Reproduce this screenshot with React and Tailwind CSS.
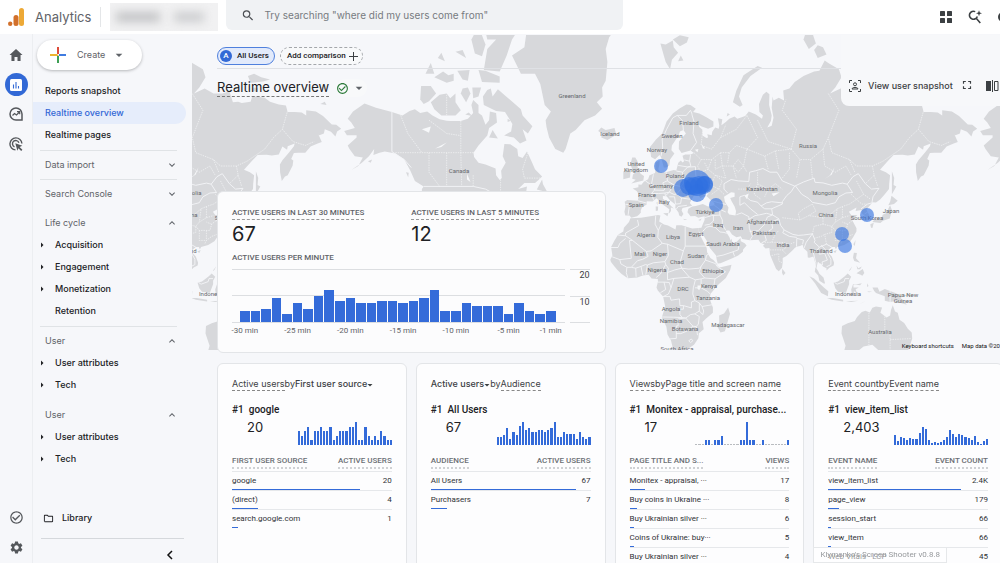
import { IoMdHome } from "react-icons/io";
import {
  MdArrowDropDown,
  MdArrowRight,
  MdCheckCircleOutline,
  MdFullscreen,
  MdKeyboardArrowDown,
  MdKeyboardArrowUp,
  MdOutlineFolder,
  MdSearch,
  MdSettings,
} from "react-icons/md";

// mercator projection used by the map drawing
const WORLD = 636;
const SCALE = WORLD / (2 * Math.PI);
const LON_ZERO = 641;
const EQUATOR = 286;

function project(pair) {
  const [lon, lat] = pair.split(",").map(Number);
  const x = LON_ZERO + (lon * WORLD) / 360;
  const y =
    EQUATOR - SCALE * Math.log(Math.tan(Math.PI / 4 + (lat * Math.PI) / 360));
  return x.toFixed(1) + " " + y.toFixed(1);
}

function toPath(coords, close) {
  return "M" + coords.split(" ").map(project).join("L") + (close ? "Z" : "");
}

const land = [
  // eurasia
  "25.7,71.1 28,71 31,70.3 29.5,69.7 33,69.4 37,68.6 41,67.7 41,66.6 38,66.1 34,66.7 32.5,67.1 33,66.5 34.8,65.9 34.8,64.5 37,63.9 38,64 37.5,64.8 40,64.6 40.3,65.4 42,66.4 44,66.1 44.3,66.8 43.5,68.4 46,68.2 45.5,66.9 48,67.6 50,68.3 53,68.8 54.5,68.3 57,68.6 59,68.9 61,69.8 65,69.2 68.5,68.3 69,69 67,69.7 66.8,71.2 69,72.8 71,73.3 72.7,72.9 72.5,71 74,69 73.5,67.8 71.5,66.4 74,66.8 75,68.5 74,70.5 74.5,72.5 75,71.8 78,72.3 81,71.8 80.5,73.5 84,73.8 87,74.8 92,75.7 98,76.3 101,76.4 104,77.7 106,77.4 112,76.6 113.5,75.5 110,74 107,73 113,73.8 118,73 123,73 127,73.4 129,71.5 132,71.6 134,71.4 139,71.6 140,72.6 147,72.3 150,71.6 155,71.1 159,70.9 160,69.7 164,69.7 168,69.6 170.5,69 170.5,70 176,69.8 180,68.9 185,67.1 187.5,67 190.3,66.1 188,65.5 187,64.3 184.5,65.4 181,66 180.5,65 178,64.6 177.5,64.7 179.3,62.9 177,62.5 173,61.7 170,60 166,60 163.5,59.9 162,58.2 163.2,57.7 162.8,56.1 161.8,55 160,53 158.5,52.5 156.7,51 155.7,54 155.6,56.5 157,57.8 161,60.2 163.5,61.8 164,62.5 160,61.8 159.7,60.8 157,61.7 155,59.5 151,59.2 148,59.4 143,59.3 140,57.7 135.3,54.8 138.6,54 141,53 140.5,50 140.4,48 138,46 135.5,44 133,42.7 131,42.8 129.7,41.5 127.5,39.7 129.3,37 129.3,35.3 126.5,34.4 126.5,37 125,38 125,39.5 121.5,39 122,40.6 119,39.2 117.7,38.7 119,37.2 122.5,37.2 119.5,35 121,32.6 122,31 121.9,29.5 120,26.5 118.5,24.5 115,22.6 111,21.5 110.3,20.4 109.7,21.5 108,21.5 106,20 105.7,18.8 108,16.5 109.3,13 109,11.5 106.8,10.4 105,8.7 105,10 103,11 102,12.5 100.9,12.8 100.5,13.5 100,13.3 99.3,10 100.3,8.3 101,6.9 103.3,4.8 104.2,1.4 103.4,1.4 101,3 100.3,6 98.4,8 98.7,10.5 98.6,13 97.6,16.5 95.3,15.8 94.4,16 94.2,19 92,21 91.5,22.7 90,22 88,21.7 87,21 86,20 82.3,16.7 80.2,15.6 80.2,13 79.8,10.3 78,8.3 76.5,9.5 74.5,14 73,17.5 72.7,21 70.5,20.8 69,22.2 70,22.8 67.5,23.8 66.5,25.3 61.6,25.1 57.3,25.7 56.5,27.1 54,26.6 51.5,27.9 50,30 48.5,30 48,29.5 50,26.7 50.8,25 51.3,26 51.6,24.2 54,24.2 56.3,26.2 56.5,24.5 58.7,23.5 59.8,22.4 57.8,20.3 57.7,19 55,17 52,15.6 48,14 45,12.8 43.4,12.6 42.8,15 42.5,17 39,21 37.2,24.8 35,28 34.9,29.5 34.3,27.9 32.5,29.8 32.5,31.2 34.2,31.3 35,33 36,35 36,36.7 34,36.3 32.5,36 30.6,36.8 28,36.7 26.3,38.5 26.8,40 29,41 31,41.2 35,42 38,41 41.5,41.5 41.5,42.5 39,44 37,45.3 39,47.2 36,46.6 35,46.2 36.5,45.4 35,44.9 33.6,44.5 32.6,45.5 33.5,46 31,46.6 29.7,45.2 28.6,43.8 27.7,42.5 28.9,41.3 26,40.8 23.5,40.3 23,39.2 24,37.7 22.9,36.5 21.6,37 21.2,38.3 19.4,40.3 19.5,41.8 16.5,43.5 14.5,45.2 12.4,45.3 12.4,44.2 13.7,43.5 16,41.9 18.5,40.1 16.9,40.5 17,39 16,38 15.7,38.2 16,39.8 14.5,40.7 12.2,41.8 10.4,43.3 8.8,44.4 6.5,43.1 3.2,43.2 3.2,41.8 0.5,40.6 -.2,39 0,38.5 -1,37.5 -2.2,36.7 -5.5,36 -6.5,37 -8.9,37 -9.4,38.7 -8.8,41 -9.2,43 -7.8,43.7 -1.8,43.4 -1.2,46 -2.5,47.3 -4.7,48.2 -1.5,48.7 -1.5,49.7 .2,49.6 1.6,50.7 4,51.6 4.8,53 8,53.7 8.2,55.5 8.2,57 10.6,57.7 10.4,56.4 9.8,55 10.9,54 14,54 18.5,54.7 20,54.6 21.1,57 22.6,57.7 23.5,57.1 24.4,57.5 23.5,59.1 25,59.5 28,59.5 30,59.9 28,60.6 23,59.9 21.4,61 21.5,63 25.4,65 24,65.8 22,65.5 21.3,64.5 17.5,62 17.2,60.7 18.9,59.8 16.5,58 16,56.2 14.2,55.5 12.9,55.5 11.3,58.8 10.5,59.3 8,58.1 5.7,58.8 5,61.5 8.5,63.5 12,65 14.5,67.7 18,69.4 22,70.4",
  // africa
  "-6,35.8 0,36 9.7,37.3 11,37 10.3,34.3 13,32.8 15.3,32.3 19.5,30.5 20,32.5 23,32.5 29,30.9 32.6,31.2 32.6,29.8 33.8,27 35.5,24 37.2,21 37.4,18.8 39.3,15.6 41,14.6 43.2,12 43,11.5 44.5,10.4 51.2,11.9 50.5,9 48,4.5 44,1 41.5,-1.8 39.5,-4.3 38.9,-6.5 39.5,-9 40.7,-12 40.7,-15 37,-18 34.8,-20 35.5,-23.8 32.8,-25.8 32.5,-28.3 30,-31.5 26,-33.8 20,-34.8 18.3,-34 17,-29.5 15,-26.5 14.4,-22.5 11.8,-17.5 13.7,-11.5 12.5,-6 9.5,-2.5 8.8,-.8 9.6,2.5 9.5,3.9 6,4.3 4.3,6.3 1,6 -2,4.8 -7.5,4.4 -11,6.8 -13.3,9 -15,11 -17,13.5 -17.4,14.7 -16.2,17 -16.9,21.5 -15,25 -13,27.8 -10,29.5 -9.7,31.3 -6.8,34",
  "49.3,-12 50.4,-15.5 47.5,-24.8 45,-25.5 43.3,-22.5 44.3,-20 44.2,-16.5 47,-15.3",
  // british isles, iceland
  "-5.5,50.1 1.3,51.2 1.7,52.7 -.2,53.5 -2,55.8 -2,57.5 -3.2,58.6 -5,58.6 -6,56.5 -4.8,54.8 -3,54 -4.5,53.2 -5,51.8 -3,51.4",
  "-10,51.6 -6.2,52.2 -6,54 -7.3,55.3 -10,54.2",
  "-22.5,64 -19,63.4 -14,64.7 -15,66.3 -18,66 -20,65.8 -22.5,66.4 -24.3,65.6 -22,65",
  // arctic russia
  "11,79.6 13,78.2 14,77.5 16.5,76.6 17.5,77.8 21,78.6 18.5,79.2 18,79.9 14,79.5",
  "18,80 22,79.3 26,79.7 27,80.2 22,80.4",
  "21,77.6 24,77.7 22.5,78.3",
  "52,71.5 56,70.7 57.5,71 55.5,72.5 57,74 62,75.7 68.5,76.8 66,77 58,75.8 54,73.5",
  "98,78.9 100,78 105,78.4 103,79.2 100,79.4",
  "92,80 95,79 99,79.6 97,80.6 94,81",
  "137.5,75.7 141,76 145,75.5 150,75.2 146,74.9 139,74.7",
  "140,73.4 143,73.3 143,73.9 140,74",
  "178.5,71.2 182,71 181,71.6",
  "48.5,68.8 50.3,69.2 49,69.5",
  // greenland
  "-73,78.3 -68,76 -60,76 -57,74.5 -54.5,71 -51,69.8 -54,68 -53.5,66.5 -52,64 -48.5,61 -44,60 -42.7,61 -40,65 -37,65.8 -32,68 -26,69 -22,70.3 -25,71.5 -21.7,72.5 -22,74 -20,75 -19,77.5 -20,79 -18,80.2 -12,81.5 -30,83.6 -60,82 -65,80.5 -66,79.2",
  // north america
  "-168,65.6 -162,66.3 -164,67.5 -166,68.3 -163,69.8 -156.5,71.3 -150,70.5 -141,69.7 -135,69 -131,69.9 -128,70.2 -125,69.5 -121,69.8 -118,69 -114,68.2 -110,67.9 -108,67.8 -102,67.8 -98,68.3 -95,69.5 -96,71 -95,71.9 -92,71 -92,69.5 -90,69 -88,67 -86,68 -85.5,69.8 -82,69.5 -81.5,67.5 -86,66.3 -87,64.5 -92,62 -94.8,60 -94.5,58.8 -92,57 -88,56.5 -82.3,55.2 -82,53 -80,51.3 -78.8,52 -79.2,54.5 -76.6,57 -78.3,59 -77.3,62.4 -74,62.3 -70,61 -69.5,59 -67,58.5 -64.5,60.3 -62,57.5 -60,55 -56,52.5 -58,51.3 -60,50.2 -66,50.2 -69.5,48 -64.5,49 -65,47 -61,45.5 -66,43.5 -70,43 -124,43 -124,48 -123,49 -128,51 -130.5,54.5 -134,58 -139,59.8 -145,60.3 -148,60 -151.5,59.3 -151,61 -154,59 -158,57 -164,54.7 -160,56 -157.5,58.6 -162,59 -165,61 -166,62 -161,64 -161,64.6 -166.5,64.6",
  "-125,72 -123,71.2 -120,71.7 -116,73 -119,74.2 -124.5,74.2",
  "-117,70.2 -113,69 -105,69 -102,70 -105,71.5 -105,73 -108,72.2 -110,73 -114,72.8 -119,71.5",
  "-117,75.5 -110,74.7 -106,75 -106,76 -109,75.8 -112,76.3",
  "-122,76 -117,76 -119,77.4",
  "-102,73 -99,71.5 -96.5,73 -98,74 -101,73.8",
  "-95.5,74 -95,72.2 -92,72.5 -90.5,74",
  "-89,71 -89.5,72.5 -87,73.6 -85,73.8 -84,72.5 -81,73.7 -77,72.7 -72,71.4 -68,70.2 -67,69 -61.5,66.7 -64,65 -67,66 -64.8,63.3 -68.5,62.5 -72,64 -77.5,64.5 -73.5,65.5 -72.8,67.2 -77,69.7 -82,69.9",
  "-92,76.5 -90,74.8 -80,74.7 -80,75.6 -88,76.4",
  "-89,76.5 -80,76.3 -76,78.3 -73,80 -62,82.5 -90,82 -87,80 -82,80 -87,79",
  "-96,80 -94,78.5 -90,78.2 -88,79.5 -92,81.2",
  "-86,64 -81,63.8 -84,65.8",
  "-104,76.4 -101,75.2 -98,75 -97,76.5",
  "-105,78.7 -99,78 -101,78.9",
  "-115,78 -111,77.6 -113,78.6",
  "-97.5,69.6 -95.6,68.9 -99.5,69.2",
  "-75.5,68.3 -73.8,67.9 -75.5,67.6",
  "-59,47.8 -53,46.8 -55.5,49.8 -56,51.5",
  "-154.6,57.5 -152.2,58 -153,57",
  "-133,54 -131.5,53.8 -131.8,52.3",
  // east asia
  "130.9,34 135.5,33.5 137,34.6 140.8,35.7 142,39.5 141,41.5 140,40 139.5,38.3 136.8,37.4 136,35.7 132.5,35.5",
  "140,41.5 143.2,42 145.3,43.4 141.8,45.4 141,43",
  "129.8,33 131.8,33.7 131,31.2 130.2,31.3",
  "142,54.3 143.3,52 143,49.5 144.5,49 142.7,46.8 142,46 142,50",
  "121.5,25.2 121,22 120.2,23",
  "108.8,19.2 110.8,20 110,18.4",
  "120.5,18.5 122.2,18.4 121.7,15.5 124,13 120.7,14 120,16",
  "122,7.2 125.5,9.6 126.4,7.3 125.3,5.8 124,6.5",
  "122,11.6 123,10 125,11 124,9.4 122.5,9.4",
  "117.5,8.5 119.5,11 118.5,9",
  "95.3,5.5 98,4.2 103.5,-.8 106,-3 105.8,-5.8 102,-4 98.5,1.5",
  "105.3,-6.7 108.5,-6.8 114.4,-7.8 114.4,-8.7 108,-7.8",
  "109,1.8 111.5,2.5 115,5.2 117,7 119,5.2 117.8,3 117.8,1 116,-3.8 111.5,-3.3 110,-1.3",
  "119.5,-5.5 120.5,-5.5 120.5,-2.8 122.5,-4.5 121.5,-1.8 123.3,-.9 120.3,-.8 120.2,.5 125,1.5 124,.4 120,1 119,-2",
  "116,-8.5 119,-8.4 123,-8.3 119,-9",
  "124,-10 127,-8.5 125,-9.5",
  "128,1.5 128.8,0 128,-.6",
  "128,-3 130.8,-3.2 129,-3.5",
  "131,-.8 134,-.8 135,-3.3 138,-1.7 144,-3.9 147.8,-6 147,-6.8 150.5,-10.5 147,-9.5 143.5,-8.6 141,-9.1 138,-8.3 138,-5.8 133,-4 132,-2.8",
  "148.5,-5.7 152,-4.3 151,-5.8",
  "80,9.7 81.8,7.3 80.5,6 79.8,7.5",
  "142.5,-10.8 143.8,-14.3 145.3,-15 146.3,-18.8 149,-20.5 151,-23.5 153.2,-25.5 153.5,-28.5 152,-32.5 150,-37 146,-39 140,-38 138,-35 136,-34.8 135,-34.6 131,-31.5 126,-32.3 123.5,-34 118,-35 115,-34.3 115.8,-32 113.5,-26 113.8,-22 117,-20.6 121,-19.5 122.3,-17.2 125,-14.5 127,-13.9 129.5,-14.9 131,-12.2 133,-11.5 136.5,-12 135.5,-15 139,-17.6 141,-16.5 141.5,-13.5",
  // mediterranean
  "8.3,41 9.7,41 9.6,39.2 8.4,39",
  "8.7,42.6 9.4,43 9.3,41.4",
  "12.5,38 15.5,38.2 15,36.7",
  "23.6,35.5 26.2,35.2 24.8,35",
  "32.4,35 34.4,35.6 33.5,34.6",
];

const water = [
  "47,45 51,46.8 53,46.6 53,45 50.5,44.5 51.3,43.2 53,41 53.8,39 53.5,37 50,37.5 49,38.5 49.5,40.5 47.5,43",
  "58.5,45.5 61,46.3 60,44",
  "104,51.7 107,53 109.5,55.6 108,53.2",
  "30.5,60.8 32.5,61 32,60.1",
  "34.5,62.2 36.3,61.2 35,61.2",
  "32,.3 34,.2 33,-2.4 32,-1.5",
  "-124,66 -119,66.6 -120,65.2",
  "-116.5,61.2 -110,62.8 -113,61.6",
  "-98.5,53.5 -96.5,50.6 -98.5,51.5",
  "74,46.3 78.5,46.8 75,45.2",
];

const borders = [
  "49,46.5 47,48 47,50 51,51.5 55,51 61,50.8 61.5,54 65,54.5 69,55.2 73,54 77,54 80,51 87,49.1 92,50.6 98,52 98.5,50.5 103,50.3 108,49.4 114,50.2 116.7,49.8 120,52.5 123,53.5 127,50 130.5,48 134.7,48.3 131.3,45 130.7,42.5",
  "87.5,49.1 91,46 95,44.3 97,42.7 105,41.6 110,42.6 112,45 116,46.5 119.7,46.7 116.7,49.8",
  "87,49.1 85,47 82.5,45.5 80,43 80,42 74,40 74.5,37.3 78,35.5 79,32.5 81,30.2 86,28 89,27.5 92,27.7 97,28.3 98.5,25 98,24 101,21.5 105,23 108,21.5",
  "56,45 56,41.5 58.5,42.6 62,40 66,37.5",
  "56,45 58.5,45.6 62,43.5 66,42.8 68,41.2 71,42.5 74,43 80,42.5",
  "68,41.2 70,40 73,40 74,40",
  "54,37.4 57,38.2 61,36.5 61.3,31 63,27 61.7,25.2",
  "61,35.3 64.5,37 67,37.3 71,38 74.5,37.3 71.5,36.3 70,33 66.3,29.8 61.5,29.5",
  "68.2,23.7 71,25 70,28 74.5,31 74,34 78,35.5",
  "81,30.2 80.2,28.8 84,27 88.2,26.5",
  "40,43.4 44,42.6 48.3,41.8",
  "41.5,41.5 44.5,39.8 48,38.6",
  "44.5,39.8 44.7,37.2 46,35 46,33 48,30",
  "36,36 40,37 44.7,37.2",
  "41,37 41,34.5 39,33 36,32.5",
  "35,29.5 37,31.5 39,32 42,31.5 44.7,29.2 47,29 48.5,28.5",
  "42.8,16.5 46.5,17.2 52,19 53,16.6",
  "52,19 55,20 55.5,22.7 51.5,24.2",
  "24,52 31,52 34,52.3 36,50.3 40,49.6 39,47.2",
  "24,52 24,50 22.5,49 24.5,48 28,48.4 30,46.2",
  "24,52 23.5,54 26.5,55.7 30.8,55.8 31,53 31.5,52",
  "22.5,49 19,49.4 15,50.9 14.2,54",
  "20,54.4 23.5,54",
  "14.8,51 12.3,50.3 13.8,48.7 13,47.5 7.6,47.6 8.2,49 6,50 7,53.3",
  "2.5,51 6,49.5 8.2,49",
  "7.6,47.6 6,46.3 7,44 7.5,43.7",
  "6,46.3 10,46.3 13.5,46.5 16,46.8 17,48 19,49.4",
  "-1.8,43.4 3.2,42.4",
  "-8.8,41.9 -6.5,41.8 -7.3,37.3",
  "11.3,59 12.3,61.5 12,63.5 14.5,66 18,68.5 20.5,69 25.7,69 28,70 29,69.2",
  "24,65.8 23.5,67.9 20.5,69",
  "28.8,69.2 30,67.7 29.5,65 31.5,62.8 28,60.6",
  "28,59.4 27.5,57.5 28.2,56 26.5,55.7 21,56.2",
  "24.5,57.9 27.5,57.5",
  "13.5,46.5 13.8,45.4 16,46.8 18.8,45.9 20.2,46.1 22.9,44.5 28,44",
  "20.2,46.1 22.5,48",
  "16,45 19,45 19.5,42 22.4,42.2 22.9,44.5",
  "20,39.8 21,41 26,41.5",
  "-2,35 -1.3,32.3 -8.7,28.7 -8.7,27.3 -13,27.7",
  "-8.7,27.3 -4.8,25 3,19.2 5.8,19.5 12,23.5 9.5,26.5 9.8,30 8,33 8.3,36.9",
  "9.8,30 11.5,33",
  "25,31.7 25,22 37,22",
  "12,23.5 15,23 24,19.5 25,22",
  "-4.8,25 -6.5,25 -5.5,15.5 -12,14.8 -16.3,16.3",
  "-17,21.3 -13,21.3 -12,23.5 -8.7,26",
  "3,19.2 4,16.5 .8,14.9 -2,14.2 -5.5,10.5 -8,10.5 -11.4,12.4 -12,14.8",
  "-8,10.5 -8.3,7.5 -7.5,4.6",
  "-3,10 -2.8,5.2",
  "-5.5,10.5 -3,10 0,11 2.5,12 3.6,11.8",
  "0,11 1,6.2",
  "15,23 15.5,17 13.5,13.7 7,13 3.6,11.8 2.7,6.4",
  "13.5,13.7 14,12 11,6.8 8.6,4.8",
  "24,19.5 22,13 23,10 27,9.5 33,10 34,11 36.5,14.5 37,17 38.5,18",
  "14,12 15.5,10 15,7.6 19,9 23,10 27.4,5 18.6,4.3 15,3.5 15,7.6",
  "9.6,2.2 13,2.2 16,2 17,-1",
  "13,2.2 14,-2 11,-3.8",
  "18.6,4.3 17,-1 15.5,-4.5 12.5,-6",
  "27.4,5 30.8,3.5 29.6,-1 29.3,-4.5 30.5,-8.3 28.5,-9 28.5,-12.3 24,-11 22,-11 21.8,-7.3 17,-8 16.5,-6 12.5,-6",
  "34,11 33,8 36,4.5 41.9,4 47.9,8 43,11 42.3,12.5 36.5,14.5",
  "30.8,3.5 34,4 36,4.5",
  "34,4 34,-1 37.6,-3 39.3,-4.6",
  "41.9,4 41,-1.7",
  "30.5,-1 34,-1",
  "30.5,-8.3 33,-9.5 34.5,-11.5 40.5,-10.5",
  "11.8,-17.3 18.5,-17.4 23.4,-17.6 22,-16 22,-13 24,-13 24,-11",
  "23.4,-17.6 25.3,-17.8 28,-16 30.4,-15.6 33,-14 33,-9.5",
  "20,-28.4 20,-22 21,-22 21,-18.3 25.3,-17.8 29.4,-22.2 26,-24.7 22.5,-26 20,-26",
  "16.5,-28.6 20,-28.4",
  "30.4,-15.6 33,-17 32.5,-21 31.3,-22.4 32,-26.8",
  "29.4,-22.2 31.3,-22.4",
  "33,-14 35,-16 35.5,-14 34.5,-11.5",
  "27,-29.6 28.5,-28.7 29.3,-29.6 28,-30.5 27,-29.6",
  "92.3,21 93.5,24 97,28.3",
  "98.7,10.3 99,13 97.5,18.5 100,20.3 101,21.5",
  "100,20.3 101,17.7 104,18.2 105.5,14.5 102.5,13.5 102.8,11.8",
  "102,22.5 104.5,20 107.5,15 107.5,12 105,10.8",
  "88,21.8 88.2,26 92,25.2 91.5,23",
  "124.5,40 128.2,42 130.6,42.5",
  "126.5,37.7 128.3,38.6",
  "109.6,2 111,1 115,2.5 115.5,4.2 117.8,4.2",
  "141,-2.6 141,-9.1",
  "-141,69.7 -141,60.3 -137,59 -134,58 -130,55.5",
  "-123,49 -95,49 -88,48 -84,46.5 -79,43.5",
];

const regions = [
  "129,-15 129,-31.7",
  "138,-17 138,-26 141,-26 141,-34",
  "129,-26 138,-26",
  "141,-29 153,-28.5",
  "-136,69 -132,65 -124,60",
  "-139,60 -94.8,60",
  "-110,60 -110,49",
  "-120,60 -120,54 -114,49",
  "-102,67.8 -102,64.5 -102,60 -101.5,49",
  "-120,68 -110,65 -102,64.5",
  "-94.8,60 -89,56.8",
  "-95,53 -95,49",
  "-79.5,51.5 -79.5,47",
  "-110,69 -110,73",
  "-64,60 -67,55 -66,52 -57,52",
  "60,69 66,64 60,61 58,56 60,54",
  "106,73 112,70 106,64 108,60 118,58 122,56 131,56 137,57.5 147,61 152,64 157,66 160,70",
  "66,68 72,63 85,61 88,66 80,70 82,72",
  "85,61 90,58 96,58 103,61 106,64",
  "60,61 70,59 76,60.5 85,61",
  "70,59 72,55",
  "76,60.5 78,55",
  "90,58 88,52",
  "84,60 84,55 80,52",
  "96,58 97,52",
  "103,61 104,56 110,54 116,56 119,53",
  "131,56 132,53 127,50",
  "132,53 134,49",
  "118,58 121,54",
  "157,66 163,63 170,62 175,63",
  "30,60 34,58 32,56 34,54 34,52",
  "34,58 40,58 45,60 50,60 54,62 60,61",
  "40,58 38,55 42,53 40,50",
  "36,57 38,55 34,54",
  "42,53 46,51 44,48 47,46",
  "38,50 44,48 40,46",
  "45,60 46,56 52,56 55,58 58,56 55,54 52,56",
  "42,58 42,55 46,56 48,52 42,53",
  "52,56 54,52",
  "50,60 49,57",
  "35,66 34,62 40,61 45,64 48,67",
  "45,64 54,66 60,69",
  "80,36 90,35 95,37 103,36 108,38 111,40",
  "97,42 99,39 95,37",
  "97,28 98,32 103,33 108,32 110,34 111,40 114,41 118,42 122,44 126,46",
  "103,33 103,36",
  "108,32 110,30 116,30 117,33 120,35",
  "105,23 104,28 108,29 108,32",
  "98,26 102,27 104,28",
  "110,30 110,25 114,25 117,27 120,28",
  "114,30 114,25 113,23",
  "114,41 114,36 110,34",
  "114,36 118,37",
  "117,33 114,34",
  "119,46 122,44 125,42 128,42",
  "122,51 126,46 130,44",
  "90,35 89,38 92,40 97,42",
  "70,24 74,24 80,24 84,23 87,24",
  "74,24 76,28 78,30",
  "73,20 80,20 82,18",
  "74,17 78,18 78,14 80,13",
  "80,24 82,21 80,20",
  "55,48 60,48 62,50",
  "66,54 66,50 72,48 76,50 80,48",
  "66,50 64,46 68,44",
  "72,48 70,45",
];

const labels = [
  ["Greenland", 572, 96],
  ["Iceland", 610, 134],
  ["Canada", 459, 171],
  ["Finland", 689, 123],
  ["Sweden", 672, 136],
  ["Norway", 657, 150],
  ["United", 636, 164],
  ["Kingdom", 636, 170],
  ["Poland", 675, 176],
  ["Germany", 661, 186],
  ["France", 647, 195],
  ["Spain", 636, 205],
  ["Italy", 664, 202],
  ["Türkiye", 705, 212],
  ["Russia", 808, 146],
  ["Kazakhstan", 762, 189],
  ["Mongolia", 825, 193],
  ["China", 826, 215],
  ["South Korea", 867, 218],
  ["Japan", 891, 211],
  ["Afghanistan", 763, 222],
  ["Pakistan", 764, 233],
  ["Iraq", 718, 225],
  ["Iran", 738, 228],
  ["Algeria", 646, 235],
  ["Libya", 673, 237],
  ["Egypt", 696, 234],
  ["Saudi Arabia", 723, 244],
  ["India", 783, 245],
  ["Thailand", 821, 251],
  ["Mali", 640, 254],
  ["Niger", 660, 254],
  ["Chad", 677, 262],
  ["Sudan", 696, 256],
  ["Nigeria", 657, 270],
  ["Ethiopia", 713, 271],
  ["DRC", 683, 289],
  ["Kenya", 709, 286],
  ["Tanzania", 708, 298],
  ["Angola", 671, 309],
  ["Namibia", 671, 321],
  ["Botswana", 685, 329],
  ["Madagascar", 728, 325],
  ["South Africa", 677, 349],
  ["Indonesia", 848, 294],
  ["Papua New", 903, 295],
  ["Guinea", 903, 301],
  ["Australia", 880, 332],
];

const dots = [
  [661, 166, 7],
  [716, 205, 7],
  [867, 215, 7],
  [842, 234, 7],
  [845, 246, 7],
  [697, 183, 13],
  [683, 188, 9],
  [697, 193, 9],
  [704, 185, 9],
  [689, 186, 9],
  [699, 185, 9],
  [694, 186, 9],
  [705, 184, 8],
];

const activeUsers = [
  4, 4, 5, 9, 3, 7, 5, 10, 12, 8, 9, 7, 7, 8, 8, 7, 8, 9, 12, 4, 4, 7, 6, 6, 6,
  3, 7, 4, 3, 4,
];

const ticks = [30, 25, 20, 15, 10, 5, 1];

const cards = [
  {
    metric: "Active users",
    dimension: "First user source",
    menu: "dimension",
    top: "google",
    value: "20",
    head: ["FIRST USER SOURCE", "ACTIVE USERS"],
    bars: [
      3, 2, 3, 4, 1, 3, 3, 4, 3, 3, 4, 1, 2, 3, 3, 3, 4, 4, 5, 1, 1, 4, 2, 1, 2,
      1, 3, 2, 1, 1,
    ],
    rows: [
      ["google", "20", 80],
      ["(direct)", "4", 16],
      ["search.google.com", "1", 4],
    ],
  },
  {
    metric: "Active users",
    dimension: "Audience",
    menu: "metric",
    top: "All Users",
    value: "67",
    head: ["AUDIENCE", "ACTIVE USERS"],
    bars: activeUsers,
    rows: [
      ["All Users", "67", 91],
      ["Purchasers", "7", 10],
    ],
  },
  {
    metric: "Views",
    dimension: "Page title and screen name",
    top: "Monitex - appraisal, purchase...",
    value: "17",
    head: ["PAGE TITLE AND S...", "VIEWS"],
    bars: [
      0, 0, 0, 1, 1, 0, 1, 1, 2, 0, 0, 0, 0, 0, 1, 1, 5, 1, 1, 0, 0, 1, 0, 0, 0,
      0, 0, 0, 0, 1,
    ],
    rows: [
      ["Monitex - appraisal, ···", "17", 10],
      ["Buy coins in Ukraine ···", "8", 5],
      ["Buy Ukrainian silver ···", "6", 3],
      ["Coins of Ukraine: buy···", "5", 3],
      ["Buy Ukrainian silver ···", "4", 2],
    ],
  },
  {
    metric: "Event count",
    dimension: "Event name",
    top: "view_item_list",
    value: "2,403",
    head: ["EVENT NAME", "EVENT COUNT"],
    bars: [
      30, 12, 24, 22, 14, 22, 18, 18, 36, 54, 48, 15, 6, 8, 6, 10, 15, 24, 46,
      32, 24, 32, 30, 24, 21, 15, 28, 9, 4, 12, 18,
    ],
    barMax: 69,
    rows: [
      ["view_item_list", "2.4K", 83],
      ["page_view", "179", 7],
      ["session_start", "66", 2],
      ["view_item", "66", 2],
      ["Web Vitals - LCP", "45", 2],
    ],
  },
];

const navGroups = [
  { title: "Data import", line: true },
  { title: "Search Console", line: true },
  {
    title: "Life cycle",
    items: ["Acquisition", "Engagement", "Monetization", "Retention"],
  },
  { title: "User", line: true, items: ["User attributes", "Tech"] },
  { title: "User", items: ["User attributes", "Tech"] },
];

function WorldMap() {
  return (
    <svg
      viewBox="192 35 808 315"
      preserveAspectRatio="xMinYMin slice"
      className="absolute top-0 left-0 h-[315px] w-full"
      aria-label="Active users by location"
    >
      <defs>
        <g id="world">
          {land.map((c, i) => (
            <path key={i} d={toPath(c, true)} fill="#d7d8db" />
          ))}
          {water.map((c, i) => (
            <path key={i} d={toPath(c, true)} fill="#f7f8fa" />
          ))}
          <g fill="none" stroke="#f4f5f7" strokeLinejoin="round">
            {borders.map((c, i) => (
              <path key={i} d={toPath(c)} strokeWidth="0.9" />
            ))}
            {regions.map((c, i) => (
              <path
                key={i}
                d={toPath(c)}
                strokeWidth="0.7"
                strokeDasharray="1.4 1"
              />
            ))}
          </g>
          <g
            fill="#66686c"
            fontFamily="Roboto, sans-serif"
            fontSize="6"
            textAnchor="middle"
          >
            {labels.map(([name, x, y]) => (
              <text key={name} x={x} y={y + 2}>
                {name}
              </text>
            ))}
          </g>
        </g>
      </defs>
      <use href="#world" x={-WORLD} />
      <use href="#world" x={WORLD} />
      <use href="#world" />
      <g fill="#2f6fe0" fillOpacity="0.62">
        {dots.map(([x, y, r], i) => (
          <circle key={i} cx={x} cy={y} r={r} />
        ))}
      </g>
    </svg>
  );
}

function Header() {
  return (
    <header className="flex h-[34px] shrink-0 items-center overflow-hidden bg-white">
      <a href="#home" className="flex items-center gap-[11px] pl-2">
        <svg viewBox="0 0 16 18" className="h-[18px] w-4">
          <rect x="11" y="0" width="5" height="18" rx="2.5" fill="#eda936" />
          <rect x="5.5" y="7" width="5" height="11" rx="2.5" fill="#d2702b" />
          <circle cx="2.2" cy="15.8" r="2.2" fill="#d2702b" />
        </svg>
        <span className="text-[13px] leading-[18px] text-[#5f6368]">
          Analytics
        </span>
      </a>
      <div className="ml-[9px] h-[20px] w-px bg-[#e4e6e8]" />
      <div className="relative ml-[9px] h-[28px] w-[108px] overflow-hidden bg-[#f1f1f2]">
        <div className="absolute top-[9px] left-[6px] h-[10px] w-[44px] bg-[#c2c3c5] blur-[5px]" />
        <div className="absolute top-[9px] left-[64px] h-[10px] w-[30px] bg-[#cccdcf] blur-[5px]" />
      </div>
      <label className="ml-2 flex h-[30px] w-[397px] items-center gap-[9px] self-start rounded-b-md bg-[#f0f2f4] pl-[15px]">
        <MdSearch className="h-[15px] w-[15px] text-[#4b4e52]" />
        <input
          type="text"
          aria-label="Search"
          placeholder={'Try searching "where did my users come from"'}
          className="w-full bg-transparent text-[10px] leading-4 outline-none placeholder:text-[#777b80]"
        />
      </label>
      <div className="-mr-2 ml-auto flex shrink-0 items-center gap-4 text-[#3c4043]">
        <button type="button" aria-label="Apps">
          <svg viewBox="0 0 12 12" className="h-3 w-3 fill-current">
            <rect width="5" height="5" rx="0.6" />
            <rect x="7" width="5" height="5" rx="0.6" />
            <rect y="7" width="5" height="5" rx="0.6" />
            <rect x="7" y="7" width="5" height="5" rx="0.6" />
          </svg>
        </button>
        <button type="button" aria-label="Insights">
          <svg viewBox="0 0 14 14" className="h-[14px] w-[14px]">
            <path
              d="M7.2 1.6A4 4 0 1 0 9.3 6.4M8.2 8.3L12.3 13"
              fill="none"
              stroke="currentColor"
              strokeWidth="1.6"
            />
            <path
              d="M11 .2l.8 2.2 2.2.8-2.2.8-.8 2.2-.8-2.2L8 3.2l2.2-.8z"
              fill="currentColor"
            />
          </svg>
        </button>
        <button
          type="button"
          aria-label="Help"
          className="h-[10px] w-[10px] rounded-full bg-[#3c4043]"
        />
      </div>
    </header>
  );
}

function Rail() {
  return (
    <nav className="flex w-[33px] shrink-0 flex-col items-center border-r border-[#eceef1] pt-[13px] pb-2 text-[#55585c]">
      <a href="#home" aria-label="Home">
        <IoMdHome className="h-4 w-4" />
      </a>
      <a
        href="#reports"
        aria-label="Reports"
        className="mt-[10px] flex h-[23px] w-[23px] items-center justify-center rounded-full bg-[#3269d6]"
      >
        <svg viewBox="0 0 12 12" className="h-3 w-3">
          <rect width="12" height="12" rx="1.5" fill="#fff" />
          <path
            d="M3.500 5.500v4M6 3v6.500M8.500 7v2.500"
            stroke="#3269d6"
            strokeWidth="1.1"
          />
        </svg>
      </a>
      <a href="#explore" aria-label="Explore" className="mt-[11px]">
        <svg
          viewBox="0 0 14 14"
          className="h-[14px] w-[14px]"
          fill="none"
          stroke="currentColor"
          strokeWidth="1.5"
        >
          <path d="M7 1a6 6 0 1 0 0 12h6V7A6 6 0 0 0 7 1z" />
          <path d="M3.500 8.500l2-2 2 1.500 3-3M8 4.700h2.700v2.600" strokeWidth="1.200" />
        </svg>
      </a>
      <a href="#advertising" aria-label="Advertising" className="mt-4">
        <svg
          viewBox="0 0 14 14"
          className="h-[14px] w-[14px]"
          fill="none"
          stroke="currentColor"
          strokeWidth="1.4"
        >
          <path d="M6.500 12.900A6 6 0 1 1 12.900 6.500" />
          <path d="M5.500 9.800A3.300 3.300 0 1 1 9.900 5.700" />
          <path
            d="M6.300 6.300l7 2.500-2.700 1.200 2.800 2.800-1.200 1.200-2.800-2.800-1 2.500z"
            fill="currentColor"
            stroke="none"
          />
        </svg>
      </a>
      <a href="#tasks" aria-label="Tasks" className="mt-auto">
        <MdCheckCircleOutline className="h-[15px] w-[15px]" />
      </a>
      <a href="#admin" aria-label="Admin" className="mt-[15px]">
        <MdSettings className="h-[15px] w-[15px]" />
      </a>
    </nav>
  );
}

function NavGroup({ title, items, line }) {
  return (
    <div
      className={`border-t py-[3px] ${
        line ? "border-[#e0e3e6]" : "border-transparent"
      }`}
    >
      <button
        type="button"
        className="flex h-[22px] w-full items-center justify-between pl-[5px] text-[#5f6368]"
      >
        {title}
        {items ? (
          <MdKeyboardArrowUp className="-mr-px h-3 w-3" />
        ) : (
          <MdKeyboardArrowDown className="-mr-px h-3 w-3" />
        )}
      </button>
      {items && (
        <ul className="mb-px font-medium text-[#202124]">
          {items.map((item) => (
            <li key={item}>
              <a href={"#" + item} className="flex h-[22px] items-center">
                <span className="w-[15px]">
                  {item !== "Retention" && (
                    <MdArrowRight className="-ml-1 h-3 w-3" />
                  )}
                </span>
                {item}
              </a>
            </li>
          ))}
        </ul>
      )}
    </div>
  );
}

function Sidebar() {
  return (
    <aside className="flex w-[159px] shrink-0 flex-col text-[9px] leading-3">
      <button
        type="button"
        className="mt-[6px] ml-1 flex h-[30px] w-[105px] shrink-0 items-center rounded-full bg-white pl-[13px] text-[#5f6368] shadow-[0_1px_3px_rgba(60,64,67,0.35)]"
      >
        <svg viewBox="0 0 16 16" className="mr-[11px] h-4 w-4">
          <path d="M7 0h2v7H7z" fill="#dd4b3a" />
          <path d="M7 9h2v7H7z" fill="#3f9f55" />
          <path d="M0 7h7l2 2H0z" fill="#eeb430" />
          <path d="M9 7h7v2H9z" fill="#3f7be0" />
        </svg>
        Create
        <MdArrowDropDown className="ml-[6px] h-4 w-4" />
      </button>
      <ul className="mt-[10px] mb-1 font-medium text-[#202124]">
        <li>
          <a href="#snapshot" className="flex h-[22px] items-center pl-3">
            Reports snapshot
          </a>
        </li>
        <li>
          <a
            href="#realtime"
            className="mr-[6px] flex h-[22px] items-center rounded-r-full bg-[#e6edfb] pl-3 text-[#3367d6]"
          >
            Realtime overview
          </a>
        </li>
        <li>
          <a href="#pages" className="flex h-[22px] items-center pl-3">
            Realtime pages
          </a>
        </li>
      </ul>
      <div className="mr-[15px] ml-[7px]">
        {navGroups.map((group, i) => (
          <NavGroup key={i} {...group} />
        ))}
      </div>
      <a
        href="#library"
        className="mt-auto flex h-[22px] items-center gap-2 pl-[10px] font-medium text-[#202124]"
      >
        <MdOutlineFolder className="h-[11px] w-[11px]" />
        Library
      </a>
      <div className="mt-[9px] mr-2 ml-2 flex h-[25px] justify-end border-t border-[#d5d8dc] pr-[10px]">
        <button type="button" aria-label="Collapse">
          <svg
            viewBox="0 0 8 10"
            className="mt-2 h-[10px] w-2"
            fill="none"
            stroke="#111"
            strokeWidth="1.500"
          >
            <path d="M6 1L2 5l4 4" />
          </svg>
        </button>
      </div>
    </aside>
  );
}

function Toolbar() {
  return (
    <div className="flex justify-between">
      <div className="grow">
        <div className="flex gap-[5px] border-b border-[#dfe1e5] pt-3 pb-[3px] [font-family:Roboto,sans-serif] text-[8px] leading-3 font-medium text-[#202124]">
          <button
            type="button"
            className="flex h-[18px] items-center gap-[5px] rounded-full border border-[#4f80dd] bg-[#e2eafb] pr-[5px] pl-[2px]"
          >
            <span className="flex h-3 w-3 items-center justify-center rounded-full bg-[#3269d6] text-white">
              A
            </span>
            All Users
          </button>
          <button
            type="button"
            className="flex h-[18px] items-center gap-[3px] rounded-full border border-dashed border-[#a4a7ab] bg-[#f8f9fa] pr-1 pl-[6px]"
          >
            Add comparison
            <svg viewBox="0 0 9 9" className="h-[9px] w-[9px]">
              <path d="M4.500 0v9M0 4.500h9" stroke="#3c4043" />
            </svg>
          </button>
        </div>
        <div className="mt-[10px] flex items-center">
          <h1 className="border-b border-dashed border-[#777] text-[13px] leading-[17px] text-[#202124]">
            Realtime overview
          </h1>
          <button
            type="button"
            aria-label="Report status"
            className="ml-[7px] flex h-[18px] items-center gap-[2px] rounded-full bg-[#f8f9fa]"
          >
            <MdCheckCircleOutline className="h-[13px] w-[13px] text-[#2c7a3a]" />
            <MdArrowDropDown className="h-4 w-4 text-[#5f6368]" />
          </button>
        </div>
      </div>
      <div className="flex h-[71px] w-[162px] shrink-0 items-end rounded-bl-lg bg-[#f7f8fa] pb-[14px] pl-2 text-[#3c4043]">
        <button
          type="button"
          className="flex items-center gap-[7px] text-[9px] leading-3 font-medium whitespace-nowrap"
        >
          <svg
            viewBox="0 0 12 12"
            className="h-3 w-3"
            fill="none"
            stroke="currentColor"
          >
            <path d="M.5 3V.5H3M9 .5h2.500V3M11.500 9v2.500H9M3 11.500H.5V9" />
            <circle cx="6" cy="4.300" r="1.500" />
            <path d="M3 9c0-2 6-2 6 0z" />
          </svg>
          View user snapshot
        </button>
        <button type="button" aria-label="Full screen" className="ml-[7px]">
          <MdFullscreen className="h-[14px] w-[14px]" />
        </button>
        <button type="button" aria-label="Compare" className="ml-3">
          <svg viewBox="0 0 13 12" className="h-3 w-[13px]">
            <path d="M0 1h5v10H0zM6 0h1v12H6z" fill="currentColor" />
            <path d="M8.500 1.500h3.500v9H8.500z" fill="none" stroke="currentColor" />
          </svg>
        </button>
      </div>
    </div>
  );
}

function UserCount({ title, count }) {
  return (
    <div>
      <h2 className="inline-block border-b border-dashed border-[#999] pb-px">
        {title}
      </h2>
      <p className="mt-[2px] [font-family:Inter,sans-serif] text-[20px] leading-6 font-normal text-[#202124]">
        {count}
      </p>
    </div>
  );
}

function UsersCard() {
  return (
    <section className="mt-[85px] h-[162px] rounded-md border border-[#e3e5e8] bg-[#fcfcfd] px-[14px] pt-4 [font-family:Roboto,sans-serif] text-[8px] leading-[10px] font-medium text-[#5f6368]">
      <div className="grid grid-cols-2">
        <UserCount title="ACTIVE USERS IN LAST 30 MINUTES" count="67" />
        <UserCount title="ACTIVE USERS IN LAST 5 MINUTES" count="12" />
      </div>
      <h2 className="mt-[7px]">ACTIVE USERS PER MINUTE</h2>
      <div className="mt-[6px] flex font-normal">
        <div className="relative mr-[5px] grow">
          <div className="absolute inset-x-0 top-0 h-[27px] border-y border-[#dcdee1]" />
          <div className="relative grid h-[54px] grid-cols-30 items-end gap-px border-b border-[#dcdee1] pr-[9px] pl-2">
            {activeUsers.map((count, i) => (
              <div
                key={i}
                className="bg-[#346bd9]"
                style={{ height: `${count * 5}%` }}
              />
            ))}
          </div>
          <div className="grid grid-cols-30 gap-px pt-[3px] pr-[9px] pl-2">
            {ticks.map((tick) => (
              <div
                key={tick}
                className="row-start-1 flex justify-center whitespace-nowrap"
                style={{ gridColumnStart: 31 - tick }}
              >
                -{tick} min
              </div>
            ))}
          </div>
        </div>
        <div className="mr-px h-[54px] w-5 shrink-0 border-b border-[#dcdee1] text-right text-[9px] leading-[10px] text-[#3c4043]">
          <div className="h-[27px] border-t border-[#dcdee1]">20</div>
          <div className="h-[26px] border-t border-[#dcdee1]">10</div>
        </div>
      </div>
    </section>
  );
}

function Sparkline({ bars, max }) {
  const top = max || Math.max(...bars);
  return (
    <div className="flex h-[23px] w-[94px] items-end gap-px">
      {bars.map((count, i) =>
        count ? (
          <div
            key={i}
            className="flex-1 bg-[#346bd9]"
            style={{ height: `${(count / top) * 100}%` }}
          />
        ) : (
          <div key={i} className="h-px flex-1 bg-[#b9bcc0]" />
        )
      )}
    </div>
  );
}

function ReportCard({ card }) {
  const underline = "border-b border-dashed border-[#888]";
  return (
    <section className="h-[260px] rounded-md border border-[#e3e5e8] bg-[#fdfdfe] px-[14px] pt-[14px]">
      <h2 className="flex items-baseline text-[9px] leading-3 whitespace-nowrap text-[#3c4043]">
        <span className={card.menu === "metric" ? "font-medium" : underline}>
          {card.metric}
        </span>
        {card.menu === "metric" && (
          <MdArrowDropDown className="-mx-[3px] h-3 w-3 self-center" />
        )}
        by
        <span className={card.menu === "dimension" ? "font-medium" : underline}>
          {card.dimension}
        </span>
        {card.menu === "dimension" && (
          <MdArrowDropDown className="-mx-[3px] h-3 w-3 self-center" />
        )}
      </h2>
      <div className="mt-3 flex gap-[5px] [font-family:Roboto,sans-serif] text-[10px] leading-[14px] font-medium whitespace-nowrap text-[#202124]">
        <span>#1</span>
        <span>{card.top}</span>
      </div>
      <div className="flex h-[28px] items-end justify-between pl-[15px]">
        <p className="self-start text-[13px] leading-5 text-[#202124]">
          {card.value}
        </p>
        <Sparkline bars={card.bars} max={card.barMax} />
      </div>
      <table className="mt-[10px] w-full table-fixed border-collapse [font-family:Roboto,sans-serif] text-[8px] leading-3 text-[#303236]">
        <thead>
          <tr className="border-b border-[#e6e8eb] text-[#6b6f74]">
            <th className="h-[16px] p-0 text-left align-top font-medium">
              <span className="inline-block whitespace-nowrap border-b-2 border-dotted border-[#cfd1d4]">
                {card.head[0]}
              </span>
            </th>
            <th className="w-[70px] p-0 text-right align-top font-medium">
              <span className="inline-block border-b-2 border-dotted border-[#cfd1d4]">
                {card.head[1]}
              </span>
            </th>
          </tr>
        </thead>
        <tbody>
          {card.rows.map(([name, count, share], i) => (
            <tr
              key={i}
              className="relative h-[19px] border-b border-[#e6e8eb] last:border-transparent"
            >
              <td className="p-0 whitespace-nowrap">
                {name}
                <span
                  className="absolute -bottom-px left-0 h-px bg-[#346bd9]"
                  style={{ width: `${share}%` }}
                />
              </td>
              <td className="p-0 text-right">{count}</td>
            </tr>
          ))}
        </tbody>
      </table>
    </section>
  );
}

export default function App() {
  return (
    <div className="flex h-screen flex-col overflow-hidden bg-[#f6f7fa] [font-family:Inter,sans-serif]">
      <Header />
      <div className="flex min-h-0 grow">
        <Rail />
        <Sidebar />
        <main className="relative mt-px min-w-0 grow overflow-hidden">
          <WorldMap />
          <div className="relative -mr-[3px] pl-[25px]">
            <Toolbar />
            <div className="grid grid-cols-2 gap-[9px]">
              <UsersCard />
              <div className="mb-[2px] flex items-end justify-end gap-2 self-end pr-[3px] [font-family:Roboto,sans-serif] text-[6px] leading-[10px] text-[#111]">
                <button type="button">Keyboard shortcuts</button>
                <span>Map data ©20</span>
              </div>
            </div>
            <div className="mt-[10px] grid grid-cols-4 gap-[9px]">
              {cards.map((card) => (
                <ReportCard key={card.dimension} card={card} />
              ))}
            </div>
          </div>
        </main>
      </div>
      <div className="fixed right-[53px] bottom-0 border border-[#e6e8ea] bg-white/50 px-[6px] py-px [font-family:Roboto,sans-serif] text-[8px] leading-3 text-[#96999d]">
        Klymenko's Screen Shooter v0.8.8
      </div>
    </div>
  );
}
